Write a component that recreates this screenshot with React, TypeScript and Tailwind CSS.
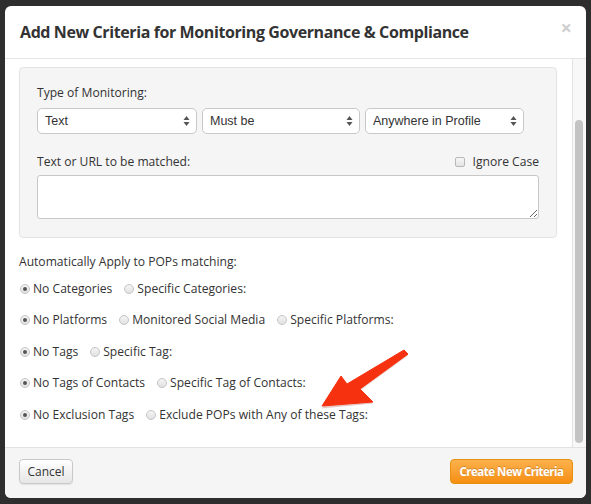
import React from 'react';

const SANS = "font-['Open_Sans',sans-serif]";

function SelectBox({ label, width }: { label: string; width: string }) {
  return (
    <div
      className={`${width} h-[26px] flex items-center justify-between pl-[7px] pr-[6px] bg-white border border-[#c8c8c8] rounded-[5px] font-['Liberation_Sans',Arial,sans-serif] text-[12.5px] text-[#333]`}
    >
      <span>{label}</span>
      <svg width="7" height="12" viewBox="0 0 7 12">
        <path d="M3.5 1 L6.5 5 L0.5 5 Z" fill="#555" />
        <path d="M3.5 11 L6.5 7 L0.5 7 Z" fill="#555" />
      </svg>
    </div>
  );
}

function Radio({ checked, label }: { checked?: boolean; label: string }) {
  return (
    <span className="flex items-center gap-[3px]">
      <span className="w-[10px] h-[10px] rounded-full border border-[#c4c4c4] bg-gradient-to-b from-[#f4f4f4] to-[#e2e2e2] flex items-center justify-center">
        {checked && <span className="w-[4px] h-[4px] rounded-full bg-[#555]" />}
      </span>
      <span>{label}</span>
    </span>
  );
}

const rows: { label: string; checked?: boolean }[][] = [
  [{ label: 'No Categories', checked: true }, { label: 'Specific Categories:' }],
  [
    { label: 'No Platforms', checked: true },
    { label: 'Monitored Social Media' },
    { label: 'Specific Platforms:' },
  ],
  [{ label: 'No Tags', checked: true }, { label: 'Specific Tag:' }],
  [{ label: 'No Tags of Contacts', checked: true }, { label: 'Specific Tag of Contacts:' }],
  [{ label: 'No Exclusion Tags', checked: true }, { label: 'Exclude POPs with Any of these Tags:' }],
];

export default function App() {
  return (
    <div className={`relative w-[591px] h-[504px] overflow-hidden bg-[#2e2e2e] pt-[6px] pl-[5px] ${SANS}`}>
      {/* Modal */}
      <div className="w-[581px] h-[492px] rounded-[6px] bg-white flex flex-col overflow-hidden">
        {/* Header */}
        <div className="h-[53px] shrink-0 border-b border-[#e5e5e5] flex items-center justify-between pl-[15px] pr-[14px]">
          <h1 className="text-[16px] font-bold text-[#333] tracking-[-0.4px]">
            Add New Criteria for Monitoring Governance &amp; Compliance
          </h1>
          <span className="text-[20px] font-bold leading-none text-[#cfcfcf] -mt-[8px]">×</span>
        </div>

        {/* Body */}
        <div className="h-[388px] shrink-0 flex">
          <div className="flex-1 pl-[14px] pr-[15px] pt-[8px] text-[12.1px] text-[#333]">
            {/* Well */}
            <div className="border border-[#e3e3e3] bg-[#f5f5f5] rounded-[4px] pl-[17px] pr-[17px] pt-[16px] pb-[18px]">
              <div className="h-[18px] leading-[18px]">Type of Monitoring:</div>
              <div className="mt-[6px] flex gap-[5px]">
                <SelectBox label="Text" width="w-[160px]" />
                <SelectBox label="Must be" width="w-[158px]" />
                <SelectBox label="Anywhere in Profile" width="w-[159px]" />
              </div>
              <div className="mt-[19px] h-[18px] leading-[18px] flex items-center justify-between">
                <span>Text or URL to be matched:</span>
                <span className="flex items-center gap-[8px]">
                  <span className="w-[10px] h-[10px] rounded-[2px] border border-[#b9b9b9] bg-gradient-to-b from-[#f7f7f7] to-[#e3e3e3]" />
                  <span>Ignore Case</span>
                </span>
              </div>
              <textarea className="mt-[4px] block w-full h-[44px] bg-white border border-[#c8c8c8] rounded-[3px] outline-none" />
            </div>

            <div className="mt-[15px] h-[18px] leading-[18px]">Automatically Apply to POPs matching:</div>
            <div className="mt-[2px] pl-[1px]">
              {rows.map((row, i) => (
                <div key={i} className="h-[31.5px] flex items-center gap-[12px]">
                  {row.map((r) => (
                    <Radio key={r.label} label={r.label} checked={r.checked} />
                  ))}
                </div>
              ))}
            </div>
          </div>

          {/* Scrollbar */}
          <div className="w-[14px] shrink-0 border-l border-[#e3e3e3] bg-[#f8f8f8] pt-[61px] pl-[2px]">
            <div className="w-[8px] h-[323px] rounded-full bg-[#c3c3c3]" />
          </div>
        </div>

        {/* Footer */}
        <div className="flex-1 border-t border-[#e2e2e2] bg-[#f5f5f5] flex items-start justify-between pl-[14px] pr-[13px] pt-[11px]">
          <button className="h-[25px] w-[54px] rounded-[4px] border border-[#c9c9c9] bg-gradient-to-b from-white to-[#e6e6e6] text-[12px] text-[#333] shadow-[0_1px_1px_rgba(0,0,0,0.08)]">
            Cancel
          </button>
          <button className="h-[25px] w-[123px] rounded-[4px] border border-[#e8900f] bg-gradient-to-b from-[#fbb14a] to-[#f68f0b] text-[11.5px] font-bold tracking-[-0.5px] text-white [text-shadow:0_-1px_0_rgba(0,0,0,0.2)]">
            Create New Criteria
          </button>
        </div>
      </div>

      {/* Annotation arrow */}
      <svg className="absolute left-0 top-0 pointer-events-none" width="591" height="504" viewBox="0 0 591 504">
        <polygon
          points="322,407 341,376 347,384 404,350 408,354 360,389 373,402"
          fill="#9a2a1a"
          opacity="0.25"
          transform="translate(0,1.5)"
        />
        <polygon
          points="322,406 341,376 347,384 404,350 408,354 360,389 373,402"
          fill="#f6310f"
          stroke="#f6310f"
          strokeWidth="1"
          strokeLinejoin="round"
        />
      </svg>
    </div>
  );
}
